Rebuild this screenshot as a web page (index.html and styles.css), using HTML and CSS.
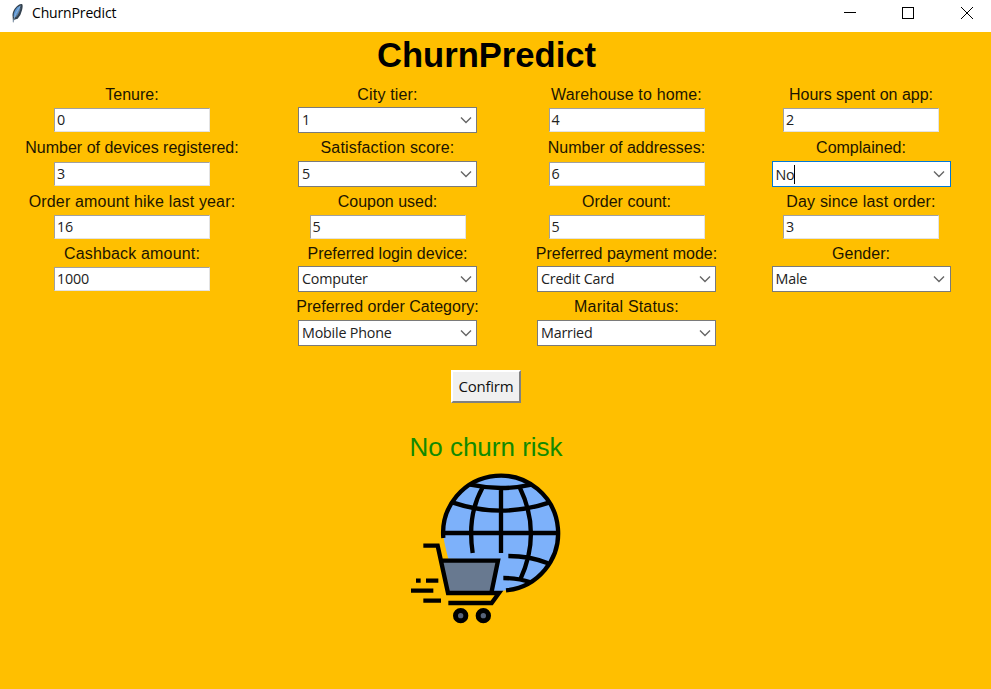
FILE: index.html
```html
<!DOCTYPE html>
<html lang="en">
<head>
<meta charset="utf-8">
<title>ChurnPredict</title>
<link rel="stylesheet" href="styles.css">
</head>
<body>
<header class="titlebar">
  <svg class="feather" width="16" height="22" viewBox="0 0 48 66">
    <path d="M15 63 L14 46 Q11 34 20 20 Q31 5 42 6 Q46 9 42 25 Q39 40 29 50 L19 53 Z" fill="#34424f"/>
    <path d="M17 43 Q16 30 28 16 L37 11 Q36 29 20 48 Z" fill="#5b97d6"/>
    <path d="M23 47 Q34 36 39 14 L29 34 Z" fill="#6d8296"/>
    <path d="M15 60 Q20 35 37 11" fill="none" stroke="#a3bdd6" stroke-width="2"/>
  </svg>
  <span class="caption">ChurnPredict</span>
  <svg class="controls" width="132" height="14" viewBox="0 0 132 14" fill="none" stroke="#000" shape-rendering="crispEdges">
    <path d="M1 6.5H13M59.5 1.5h11v11h-11z"/>
    <path d="M118 1l12 12M130 1l-12 12" shape-rendering="auto"/>
  </svg>
</header>
<main>
  <h1>ChurnPredict</h1>
  <section class="form">
    <label>Tenure:</label><label class="wide">City tier:</label><label class="wide">Warehouse to home:</label><label>Hours spent on app:</label>
    <div class="entry">0</div>
    <div class="combo">1<svg class="arrow" viewBox="0 0 12 8"><path d="M1 1.5l5 5 5-5"/></svg></div>
    <div class="entry">4</div>
    <div class="entry">2</div>

    <label>Number of devices registered:</label><label class="wide">Satisfaction score:</label><label>Number of addresses:</label><label>Complained:</label>
    <div class="entry">3</div>
    <div class="combo">5<svg class="arrow" viewBox="0 0 12 8"><path d="M1 1.5l5 5 5-5"/></svg></div>
    <div class="entry">6</div>
    <div class="combo focused"><span class="caret">No</span><svg class="arrow" viewBox="0 0 12 8"><path d="M1 1.5l5 5 5-5"/></svg></div>

    <label class="wide">Order amount hike last year:</label><label>Coupon used:</label><label>Order count:</label><label class="wide">Day since last order:</label>
    <div class="entry">16</div>
    <div class="entry">5</div>
    <div class="entry">5</div>
    <div class="entry">3</div>

    <label class="wide">Cashback amount:</label><label>Preferred login device:</label><label>Preferred payment mode:</label><label>Gender:</label>
    <div class="entry">1000</div>
    <div class="combo">Computer<svg class="arrow" viewBox="0 0 12 8"><path d="M1 1.5l5 5 5-5"/></svg></div>
    <div class="combo">Credit Card<svg class="arrow" viewBox="0 0 12 8"><path d="M1 1.5l5 5 5-5"/></svg></div>
    <div class="combo">Male<svg class="arrow" viewBox="0 0 12 8"><path d="M1 1.5l5 5 5-5"/></svg></div>

    <label class="second">Preferred order Category:</label><label class="wide">Marital Status:</label>
    <div class="combo second">Mobile Phone<svg class="arrow" viewBox="0 0 12 8"><path d="M1 1.5l5 5 5-5"/></svg></div>
    <div class="combo">Married<svg class="arrow" viewBox="0 0 12 8"><path d="M1 1.5l5 5 5-5"/></svg></div>
  </section>
  <section class="outcome">
    <button type="button">Confirm</button>
    <p class="result">No churn risk</p>
    <svg class="logo" width="180" height="175" viewBox="0 0 540 525" fill="none" stroke="#000" stroke-width="13">
      <path d="M146 234A172 172 0 1 1 333 391L290 398 315 300 160 296Q150 260 146 234Z" fill="#7db1fa" stroke="none"/>
      <path d="M145 234A172.500 172.500 0 1 1 333 391"/>
      <path d="M145 219H490M318 84V279M226 74Q318 94 410 74M174 128Q318 176 462 128"/>
      <path d="M262 84Q216 166 233 279M375 84Q440 219 376 358M340 288Q405 288 459 310M325 354Q372 354 406 367"/>
      <path d="M143 302H309L292 399H160Z" fill="#687990" stroke="none"/>
      <path d="M85 257H128L159 399H312L290 429H160M136 302H309L289 399"/>
      <path d="M63 362H77M93 362H130M48 392H115M85 422H138"/>
      <circle cx="197" cy="467" r="15.500" fill="#566279" stroke-width="15"/>
      <circle cx="265" cy="467" r="15.500" fill="#566279" stroke-width="15"/>
    </svg>
  </section>
</main>
</body>
</html>
```
FILE: styles.css
```css
* { box-sizing: border-box; }
body {
  margin: 0;
  height: 689px;
  overflow: hidden;
  background: #ffbf00;
  color: #000;
  font-family: "Liberation Sans", Arial, sans-serif;
}
.titlebar {
  display: flex;
  align-items: center;
  height: 32px;
  padding: 0 16px 6px 8px;
  background: #fff;
}
.feather { margin-top: -1px; }
.caption {
  margin-left: 8px;
  font: 14px/20px "Open Sans", "Noto Sans", sans-serif;
  letter-spacing: -0.15px;
}
.controls { margin-left: auto; }
h1 {
  width: 973px;
  height: 48px;
  margin: 0;
  font-size: 34.6px;
  line-height: 46px;
  text-align: center;
}
.form {
  display: grid;
  grid-template-columns: 264px 247px 231px 238px;
  grid-template-rows: 27px 26px 28px 26px 27px 25px 27px 26px 28px 26px;
  align-items: center;
  justify-items: center;
}
label {
  height: 26px;
  font-size: 16px;
  line-height: 28px;
  white-space: nowrap;
  color: #1c1500;
}
.wide { letter-spacing: 0.17px; }
.second { grid-column: 2; }
.entry, .combo {
  background: #fff;
  color: #222;
  font: 14.3px/22px "Open Sans", "Noto Sans", sans-serif;
  letter-spacing: -0.2px;
}
.entry {
  width: 156px;
  height: 24px;
  padding-left: 2px;
  border: 1px solid;
  border-color: #a0a0a0 #e3e3e3 #e3e3e3 #a0a0a0;
}
.combo {
  display: flex;
  align-items: center;
  justify-content: space-between;
  width: 179px;
  height: 26px;
  padding: 0 4.5px 0 3px;
  border: 1px solid #7a7a7a;
}
.focused { border-color: #0078d7; }
.caret {
  height: 19px;
  line-height: 19px;
  border-right: 1px solid #000;
}
.arrow {
  width: 12px;
  height: 8px;
  fill: none;
  stroke: #666;
  stroke-width: 1.4;
}
.outcome {
  display: flex;
  flex-direction: column;
  align-items: center;
  width: 972px;
  padding-top: 24px;
}
button {
  width: 70px;
  height: 33px;
  padding: 0 0 2px;
  border: 2px solid;
  border-color: #fff #808080 #808080 #fff;
  background: #f0f0f0;
  color: #111;
  font: 15px/26px "Open Sans", "Noto Sans", sans-serif;
  letter-spacing: -0.25px;
}
.result {
  height: 57px;
  margin: 0;
  padding-top: 27px;
  font-size: 26px;
  line-height: 34px;
  color: #128a00;
}
.logo { margin-left: -2px; }
```
